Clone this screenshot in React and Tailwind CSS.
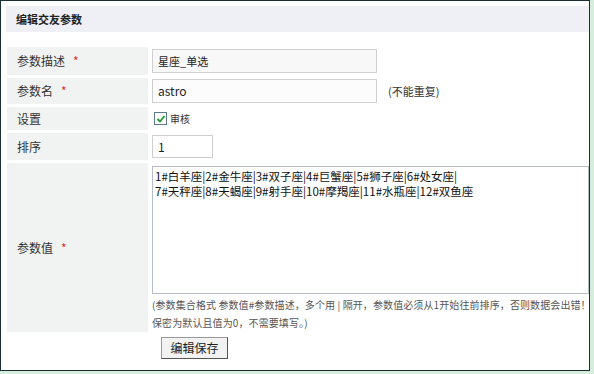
export default function App() {
  const font = { fontFamily: '"Noto Sans CJK SC", "Noto Sans", sans-serif' };
  const label = "w-[141px] shrink-0 bg-[#f1f2f2] flex items-center pl-[10px] text-[12px] text-[#333]";
  const Star = () => <span className="text-[#e0302c] ml-[8px] text-[12px]">*</span>;
  return (
    <div className="w-[594px] h-[374px] bg-[#d6ecdd] relative" style={font}>
      <div className="w-[590px] h-[371px] bg-white border border-[#1b2e33] pt-[5px] pl-[5px] flex flex-col">
        <div className="h-[26px] bg-[#eef0f6] flex items-center pl-[10px] text-[11px] font-bold text-[#222]">编辑交友参数</div>
        <div className="mt-[15px] pl-[1px] flex flex-col gap-[3px]">
          <div className="flex h-[28px]">
            <div className={label}>参数描述<Star /></div>
            <div className="ml-[4px] flex items-center">
              <div className="w-[225px] h-[24px] border border-[#cfcfcf] bg-[#f8f8f8] flex items-center pl-[5px] text-[11px] text-[#222]">星座_单选</div>
            </div>
          </div>
          <div className="flex h-[26px]">
            <div className={label}>参数名<Star /></div>
            <div className="ml-[4px] flex items-center">
              <div className="w-[225px] h-[24px] border border-[#cfcfcf] bg-[#fcfcfc] flex items-center pl-[5px] text-[12px] text-[#222]">astro</div>
              <span className="ml-[11px] text-[11px] text-[#333]">(不能重复)</span>
            </div>
          </div>
          <div className="flex h-[23px]">
            <div className={label}>设置</div>
            <div className="ml-[6px] flex items-center">
              <div className="w-[13px] h-[13px] border border-[#5a7890] bg-white flex items-center justify-center">
                <svg width="10" height="10" viewBox="0 0 10 10"><path d="M1.5 5 L4 7.5 L8.5 2" stroke="#1e9a2e" strokeWidth="1.8" fill="none" /></svg>
              </div>
              <span className="ml-[3px] text-[10px] text-[#333]">审核</span>
            </div>
          </div>
          <div className="flex h-[27px]">
            <div className={label}>排序</div>
            <div className="ml-[4px] flex items-center">
              <div className="w-[61px] h-[23px] border border-[#cfcfcf] bg-white flex items-center pl-[5px] text-[12px] text-[#222]">1</div>
            </div>
          </div>
          <div className="flex h-[169px]">
            <div className={label}>参数值<Star /></div>
            <div className="ml-[4px] flex flex-col pt-[3px]">
              <div className="w-[437px] h-[131px] border border-[#b5bdc6] bg-white px-[2px] pt-[2px] text-[11.5px] leading-[15px] text-[#111] whitespace-pre">
{"1#白羊座|2#金牛座|3#双子座|4#巨蟹座|5#狮子座|6#处女座|\n7#天秤座|8#天蝎座|9#射手座|10#摩羯座|11#水瓶座|12#双鱼座"}
              </div>
              <div className="mt-[2px] text-[10px] tracking-[0.1px] leading-[18px] text-[#555] whitespace-nowrap">(参数集合格式  参数值#参数描述，多个用 | 隔开，参数值必须从1开始往前排序，否则数据会出错！</div>
              <div className="text-[10px] tracking-[0.1px] leading-[18px] text-[#555] whitespace-nowrap">保密为默认且值为0，不需要填写。)</div>
            </div>
          </div>
          <div className="pl-[154px] pt-[2px]">
            <div className="w-[67px] h-[22px] border border-[#9a9a9a] border-r-[#555] border-b-[#555] bg-[#f2f2f2] flex items-center justify-center text-[12px] text-[#222]">编辑保存</div>
          </div>
        </div>
      </div>
    </div>
  );
}
